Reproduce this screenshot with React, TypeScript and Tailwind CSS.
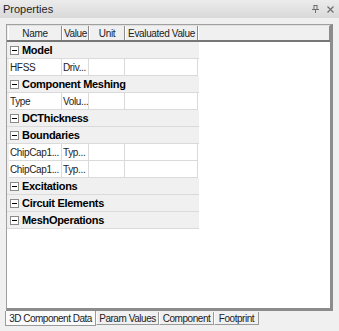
import React from 'react';

const cols = ['w-[54px]', 'w-[27px]', 'w-[36px]', 'w-[73px]'];

type Row = { kind: 'cat'; label: string } | { kind: 'data'; cells: string[] };

const rows: Row[] = [
  { kind: 'cat', label: 'Model' },
  { kind: 'data', cells: ['HFSS', 'Driv...', '', ''] },
  { kind: 'cat', label: 'Component Meshing' },
  { kind: 'data', cells: ['Type', 'Volu...', '', ''] },
  { kind: 'cat', label: 'DCThickness' },
  { kind: 'cat', label: 'Boundaries' },
  { kind: 'data', cells: ['ChipCap1...', 'Typ...', '', ''] },
  { kind: 'data', cells: ['ChipCap1...', 'Typ...', '', ''] },
  { kind: 'cat', label: 'Excitations' },
  { kind: 'cat', label: 'Circuit Elements' },
  { kind: 'cat', label: 'MeshOperations' },
];

function MinusBox() {
  return (
    <span className="w-[9px] h-[9px] border border-[#8a8a8a] bg-white flex items-center justify-center mr-[3px] shrink-0">
      <span className="w-[5px] h-px bg-black" />
    </span>
  );
}

export default function App() {
  return (
    <div className="w-[339px] h-[331px] bg-[#f0f0f0] flex flex-col text-[10px] text-black overflow-hidden" style={{ fontFamily: '"Liberation Sans", Arial, sans-serif' }}>
      {/* title bar */}
      <div className="h-[18px] bg-gradient-to-b from-[#ececec] to-[#d9d9d9] flex items-center justify-between pl-[3px] pr-[5px]">
        <span className="text-[#1e1e1e] text-[11px]">Properties</span>
        <div className="flex items-center gap-[8px] text-[#6e6e6e]">
          <svg width="7" height="8" viewBox="0 0 7 8">
            <path d="M1.5 0.5h4M2 0.5v4M5 0.5v4M0 4.5h7M3.5 4.5v3.5" stroke="#6e6e6e" fill="none" strokeWidth="1" />
          </svg>
          <svg width="7" height="7" viewBox="0 0 7 7">
            <path d="M0.5 0.5l6 6M6.5 0.5l-6 6" stroke="#6e6e6e" strokeWidth="1.2" />
          </svg>
        </div>
      </div>

      {/* grid panel */}
      <div className="flex-1 px-[6px] pt-[6px] pb-[1px] flex flex-col">
        <div className="flex-1 bg-white border-l border-t border-[#a0a0a0] border-r-[3px] border-b-[3px] border-r-[#8c8c8c] border-b-[#8c8c8c] flex flex-col">
          {/* header */}
          <div className="h-[17px] flex bg-[#f0f0f0] border-b-2 border-[#777] border-t border-t-[#e0e0e0]">
            <div className="w-px bg-[#f0f0f0]" />
            {['Name', 'Value', 'Unit', 'Evaluated Value'].map((h, i) => (
              <div key={h} className={`${cols[i]} flex items-center justify-center border-r border-[#8d8d8d] border-l border-l-white text-[#222] whitespace-nowrap overflow-hidden tracking-[-0.35px]`}>
                {h}
              </div>
            ))}
            <div className="flex-1 border-r border-[#8d8d8d] border-l border-l-white" />
          </div>

          {/* rows */}
          <div className="flex flex-col">
            {rows.map((r, i) =>
              r.kind === 'cat' ? (
                <div key={i} className="h-[17px] w-[192px] bg-[#f0f0f0] border-b border-[#dadada] flex items-center pl-[3px] font-bold text-[11px] tracking-[-0.3px]">
                  <MinusBox />
                  {r.label}
                </div>
              ) : (
                <div key={i} className="h-[17px] flex w-[192px]">
                  <div className="w-[2px] bg-[#f0f0f0]" />
                  {r.cells.map((c, j) => (
                    <div key={j} className={`${j === 0 ? 'w-[53px]' : cols[j]} border-r border-b border-[#dadada] flex items-center pl-[1px] whitespace-nowrap overflow-hidden text-[#222] tracking-[-0.35px]`}>
                      {c}
                    </div>
                  ))}
                </div>
              )
            )}
          </div>
        </div>
      </div>

      {/* tabs */}
      <div className="h-[19px] flex items-start pl-[5px] pb-[2px]">
        <div className="w-[91px] h-[15px] -mt-px bg-[#fbfbfb] border-l border-b border-r border-[#9a9a9a] flex items-center justify-center text-[#222] tracking-[-0.5px] z-10 whitespace-nowrap">
          3D Component Data
        </div>
        <div className="w-[63px] h-[13px] bg-[#f0f0f0] border-r border-b border-l border-l-white border-[#9a9a9a] flex items-center justify-center text-[#222] tracking-[-0.45px] whitespace-nowrap">
          Param Values
        </div>
        <div className="w-[55px] h-[13px] bg-[#f0f0f0] border-r border-b border-l border-l-white border-[#9a9a9a] flex items-center justify-center text-[#222] tracking-[-0.45px] whitespace-nowrap">
          Component
        </div>
        <div className="w-[45px] h-[13px] bg-[#f0f0f0] border-r border-b border-l border-l-white border-[#9a9a9a] flex items-center justify-center text-[#222] tracking-[-0.45px] whitespace-nowrap">
          Footprint
        </div>
      </div>
    </div>
  );
}
